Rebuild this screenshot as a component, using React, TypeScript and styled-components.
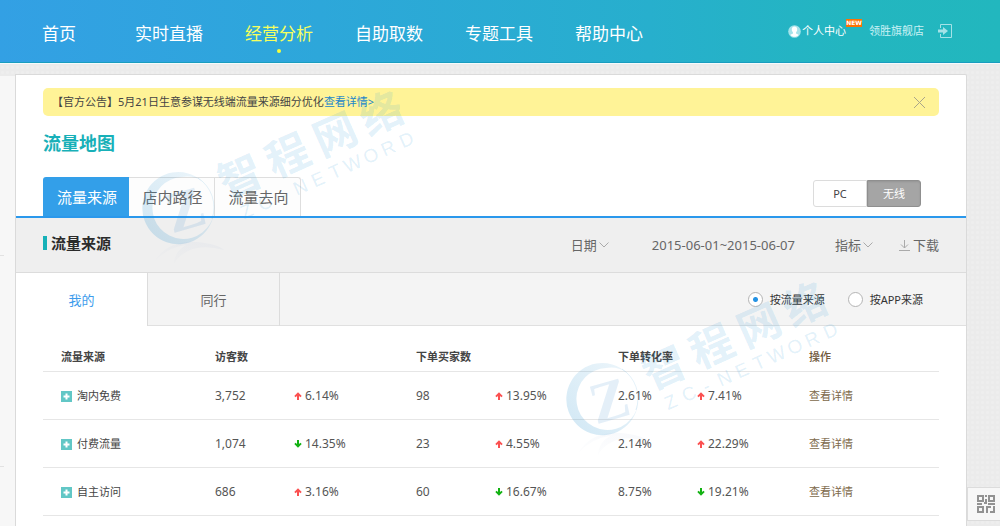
import React, { useState } from "react";
import styled, { createGlobalStyle } from "styled-components";

const GlobalStyle = createGlobalStyle`
  *, *::before, *::after { box-sizing: border-box; }
  body {
    margin: 0;
    background-color: #ebebeb;
    background-image: radial-gradient(#eeeeee 1px, transparent 2px);
    background-size: 5px 5px;
    color: #555;
    font-family: "Noto Sans", "Noto Sans CJK SC", sans-serif;
    font-size: 11px;
    line-height: 16px;
  }
  button, input { font: inherit; color: inherit; margin: 0; }
  button { border: 0; background: none; padding: 0; cursor: pointer; }
  a { text-decoration: none; color: inherit; }
`;

const Page = styled.div`
  position: relative;
  min-height: 100vh;
  display: flex;
  flex-direction: column;
  overflow: hidden;
`;

const Header = styled.header`
  height: 64px;
  display: flex;
  justify-content: space-between;
  padding: 0 47px 0 4px;
  background: linear-gradient(90deg, #33a0e4 0%, #2da7da 32%, #27afcd 65%, #23b6c0 85%, #22b7be 100%);
  border-bottom: 1px solid #f6fbfc;
  box-shadow: inset 0 -1px #1a9dbf;
`;

const Nav = styled.nav`
  display: flex;
`;

const NavLink = styled.a<{ $active?: boolean }>`
  width: 110px;
  padding-top: 22px;
  text-align: center;
  font-size: 17px;
  line-height: 24px;
  color: ${(p) => (p.$active ? "#f6ff5e" : "#fff")};

  &::after {
    content: "";
    display: ${(p) => (p.$active ? "block" : "none")};
    width: 4px;
    height: 4px;
    margin: 3px auto 0;
    border-radius: 50%;
    background: #f6ff3c;
  }
`;

const Account = styled.div`
  display: flex;
  align-items: center;
  height: 62px;
  color: #fff;
`;

const UserLink = styled.a`
  position: relative;
  display: flex;
  align-items: center;
  gap: 1px;
  margin-right: 23px;
`;

const NewBadge = styled.span`
  position: absolute;
  left: 100%;
  top: -4px;
  width: 16px;
  height: 8px;
  background: #ff7200;
  color: #fff;
  font-family: "DejaVu Sans", sans-serif;
  font-weight: 700;
  font-size: 6px;
  line-height: 8px;
  text-align: center;
`;

const ShopLink = styled.a`
  margin-right: 13px;
  color: #c9f1f4;
`;

const IconButton = styled.button`
  display: flex;
`;

const Body = styled.div`
  flex: 1;
  display: grid;
  grid-template-columns: 15px minmax(0, 1fr) 33px;
  padding-top: 10px;
`;

const Rail = styled.aside`
  margin-top: 2px;
  padding-top: 179px;
  background: #f7f7f7;
`;

const RailLine = styled.hr`
  width: 4px;
  margin: 0 0 210px;
  border: 0;
  border-top: 1px solid #e2e2e2;

  &:last-child { margin-bottom: 0; }
`;

const Panel = styled.main`
  background: #fff;
  border: 1px solid #dadada;
  border-bottom: 0;
  border-radius: 0 2px 0 0;
`;

const Notice = styled.section`
  display: flex;
  align-items: center;
  height: 28px;
  margin: 13px 27px 0;
  padding: 0 13px 0 9px;
  border-radius: 5px;
  background: #fff397;
  color: #444;
`;

const NoticeLink = styled.a`
  flex: 1;
  color: #1b86c9;
`;

const Title = styled.h1`
  margin: 14px 27px 0;
  font-size: 18px;
  line-height: 26px;
  font-weight: 700;
  color: #18b0b8;
`;

const TabBar = styled.div`
  display: flex;
  align-items: flex-end;
  justify-content: space-between;
  height: 62px;
  padding: 0 45px 0 27px;
  border-bottom: 2px solid #2a98ec;
`;

const Tabs = styled.div`
  display: flex;
`;

const Tab = styled.button<{ $active?: boolean }>`
  width: 86px;
  height: 39px;
  padding-left: 2px;
  border: solid ${(p) => (p.$active ? "#339fe9" : "#dedede")};
  border-width: ${(p) => (p.$active ? "0" : "1px 1px 0 0")};
  background: ${(p) => (p.$active ? "#339fe9" : "#fdfdfd")};
  color: ${(p) => (p.$active ? "#fff" : "#666")};
  font-size: 15px;
  line-height: 20px;

  &:first-child { border-top-left-radius: 3px; }
  &:last-child { border-top-right-radius: 3px; }
`;

const Segmented = styled.div`
  display: flex;
  width: 108px;
  height: 27px;
  margin-bottom: 9px;
`;

const Segment = styled.button<{ $active?: boolean }>`
  flex: 1;
  border: 1px solid ${(p) => (p.$active ? "#8f8f8f" : "#dcdcdc")};
  border-radius: ${(p) => (p.$active ? "0 3px 3px 0" : "3px 0 0 3px")};
  background: ${(p) => (p.$active ? "#a5a5a5" : "#fff")};
  box-shadow: ${(p) => (p.$active ? "inset 0 1px 2px #959595" : "none")};
  color: ${(p) => (p.$active ? "#fff" : "#444")};
`;

const Toolbar = styled.div`
  display: flex;
  align-items: center;
  height: 55px;
  padding: 0 27px;
  background: #efefef;
  border-bottom: 1px solid #dcdcdc;
  color: #666;
  font-size: 13px;
  line-height: 18px;
`;

const SectionTitle = styled.h2`
  display: flex;
  align-items: center;
  gap: 4px;
  flex: 1;
  margin: 0 0 4px;
  font-size: 15px;
  line-height: 20px;
  font-weight: 700;
  color: #2b2b2b;

  &::before {
    content: "";
    width: 4px;
    height: 14px;
    background: #16b1b8;
  }
`;

const ToolButton = styled.button`
  display: flex;
  align-items: center;
  gap: 2px;
`;

const DateRange = styled.span`
  margin: 0 40px 0 43px;
`;

const Download = styled(ToolButton)`
  margin-left: 26px;
  gap: 3px;
`;

const SubTabBar = styled.div`
  display: flex;
  height: 53px;
  background: #f4f4f4;
  box-shadow: inset 0 -1px #e0e0e0;
`;

const SubTab = styled.button<{ $active?: boolean }>`
  width: 132px;
  border-right: 1px solid #dcdcdc;
  background: ${(p) => (p.$active ? "#fff" : "transparent")};
  color: ${(p) => (p.$active ? "#3d9cec" : "#666")};
  font-size: 13px;
`;

const Filters = styled.div`
  display: flex;
  align-items: center;
  gap: 23px;
  margin-left: auto;
  padding-right: 43px;
  color: #333;
`;

const RadioLabel = styled.label`
  display: flex;
  align-items: center;
  gap: 7px;
`;

const Radio = styled.input`
  appearance: none;
  width: 15px;
  height: 15px;
  border: 1px solid #b4b4b4;
  border-radius: 50%;
  background: #fff;

  &:checked { background: radial-gradient(circle, #2492e4 2px, #fff 3px); }
`;

const Table = styled.table`
  width: calc(100% - 54px);
  margin: 0 27px;
  table-layout: fixed;
  border-collapse: collapse;
  font-size: 12px;
`;

const HeadCell = styled.th`
  height: 45px;
  padding: 18px 0 0 18px;
  border-bottom: 1px solid #e6e6e6;
  text-align: left;
  font-size: 11px;
  font-weight: 700;
  color: #444;
`;

const ActionHead = styled(HeadCell)`
  font-weight: 500;
  color: #70583a;
`;

const Cell = styled.td`
  height: 48px;
  padding: 2px 0 0 18px;
  border-bottom: 1px solid #e6e6e6;
`;

const SourceName = styled.div`
  display: flex;
  align-items: center;
  gap: 5px;
  font-size: 11px;
  color: #444;
`;

const Trend = styled.div`
  display: flex;
  align-items: center;
  gap: 3px;
`;

const DetailLink = styled.a`
  font-size: 11px;
  color: #7d694b;
`;

const QrButton = styled.button`
  position: absolute;
  right: 0;
  bottom: 5px;
  display: flex;
  align-items: center;
  justify-content: center;
  width: 33px;
  height: 34px;
  padding-left: 3px;
  border: 1px solid #dcdcdc;
  border-right: 0;
  background: #f7f7f7;
`;

const Watermark = styled.svg<{ $left: number; $top: number }>`
  position: absolute;
  left: ${(p) => p.$left}px;
  top: ${(p) => p.$top}px;
  pointer-events: none;
`;

const Chevron = () => (
  <svg width="10" height="6" viewBox="0 0 10 6" fill="none" stroke="#aaa" aria-hidden="true">
    <path d="M.5.5 5 5 9.500.5" />
  </svg>
);

const Arrow = ({ up }: { up: boolean }) => (
  <svg width="8" height="8" viewBox="0 0 8 8" fill="none" stroke={up ? "#fb5050" : "#12b212"} strokeWidth="2" aria-hidden="true">
    {up ? <path d="M4 8V1.500M1 4.600 4 1.600l3 3" /> : <path d="M4 0v6.500M1 3.400l3 3 3-3" />}
  </svg>
);

const Plus = () => (
  <svg width="11" height="11" viewBox="0 0 11 11" aria-hidden="true">
    <path fill="#62c7c6" d="M0 0h11v11H0z" />
    <path stroke="#fff" strokeWidth="2" d="M5.500 2.500v6M2.500 5.500h6" />
  </svg>
);

const Mark = ({ left, top, id }: { left: number; top: number; id: string }) => (
  <Watermark $left={left} $top={top} width="340" height="260" viewBox="0 -50 340 260" aria-hidden="true">
    <defs>
      <linearGradient id={id} x1="0" y1="1" x2="1" y2="0">
        <stop offset="0" stopColor="#2b93cf" stopOpacity=".22" />
        <stop offset="1" stopColor="#2b93cf" stopOpacity=".08" />
      </linearGradient>
      <linearGradient id={`${id}-fade`} x1="0" y1="1" x2="1" y2="0">
        <stop offset="0" stopColor="#7d94c4" stopOpacity=".01" />
        <stop offset="1" stopColor="#7d94c4" stopOpacity=".06" />
      </linearGradient>
    </defs>
    <path fill={`url(#${id})`} d="M72 101A36 36 0 1 0 84 133A31 31 0 1 1 52 97Q63 95 72 101Z" />
    <path fill="none" stroke={`url(#${id})`} strokeWidth="1" d="M68 98A35 35 0 0 1 82 139" />
    <text transform="translate(55 129) rotate(-16)" y="20" textAnchor="middle" fontFamily="Liberation Serif, serif" fontWeight="700" fontSize="58" fill="#3f8fd0" fillOpacity=".14">Z</text>
    <path fill={`url(#${id}-fade)`} d="M24 182Q38 160 66 162Q88 164 94 170Q72 164 58 171Q48 176 44 184Q44 172 56 165Q38 167 24 182Z" />
    <g transform="translate(108 97) rotate(-24)" fill="#2c9bd8" fillOpacity=".15" textAnchor="middle">
      <text x="2 54 106 157" y="16" fontFamily="Noto Sans CJK SC, sans-serif" fontWeight="700" fontSize="43">智程网络</text>
      <text x="-6 14 33 53 72 91 110 130 149 169" y="41" fontFamily="Liberation Sans, sans-serif" fontSize="19">ZC-NETWORD</text>
    </g>
  </Watermark>
);

const navItems = ["首页", "实时直播", "经营分析", "自助取数", "专题工具", "帮助中心"];
const tabs = ["流量来源", "店内路径", "流量去向"];
const columns = [154, 79, 122, 79, 123, 79, 112, 148];

type Metric = { value: string; change: string; up: boolean };
const rows: { name: string; metrics: Metric[] }[] = [
  {
    name: "淘内免费",
    metrics: [
      { value: "3,752", change: "6.14%", up: true },
      { value: "98", change: "13.95%", up: true },
      { value: "2.61%", change: "7.41%", up: true },
    ],
  },
  {
    name: "付费流量",
    metrics: [
      { value: "1,074", change: "14.35%", up: false },
      { value: "23", change: "4.55%", up: true },
      { value: "2.14%", change: "22.29%", up: true },
    ],
  },
  {
    name: "自主访问",
    metrics: [
      { value: "686", change: "3.16%", up: true },
      { value: "60", change: "16.67%", up: false },
      { value: "8.75%", change: "19.21%", up: false },
    ],
  },
];

export default function App() {
  const [source, setSource] = useState("flow");

  return (
    <Page>
      <GlobalStyle />
      <Header>
        <Nav>
          {navItems.map((item) => (
            <NavLink key={item} href="#" $active={item === "经营分析"}>{item}</NavLink>
          ))}
        </Nav>
        <Account>
          <UserLink href="#">
            <svg width="13" height="13" viewBox="0 0 13 13" aria-hidden="true">
              <circle cx="6.500" cy="6.500" r="6.300" fill="#a5e3ea" />
              <path fill="#fff" d="M6.500 1.600c2 0 2.900 1.400 2.700 3.200-.1 1.300-.7 2.100-1.200 2.600v1l2.600 1.400c-1.800 2.700-6.400 2.700-8.200 0L5 8.400v-1C4.500 6.900 3.900 6.100 3.800 4.800 3.600 3 4.500 1.600 6.500 1.600Z" />
            </svg>
            个人中心
            <NewBadge>NEW</NewBadge>
          </UserLink>
          <ShopLink href="#">领胜旗舰店</ShopLink>
          <IconButton aria-label="退出">
            <svg width="16" height="16" viewBox="0 0 16 16" fill="none" aria-hidden="true">
              <path stroke="#a4e2e7" d="M3.500 5V1.500h11v13h-11V11" />
              <path fill="#a4e2e7" d="M1 6.500h5V4l5 4-5 4V9.500H1z" />
            </svg>
          </IconButton>
        </Account>
      </Header>

      <Body>
        <Rail>
          <RailLine />
          <RailLine />
        </Rail>
        <Panel>
          <Notice>
            <span>【官方公告】5月21日生意参谋无线端流量来源细分优化</span>
            <NoticeLink href="#">查看详情&gt;</NoticeLink>
            <IconButton aria-label="关闭">
              <svg width="13" height="13" viewBox="0 0 13 13" stroke="#aaa58a" aria-hidden="true">
                <path d="M1 1l11 11M12 1 1 12" />
              </svg>
            </IconButton>
          </Notice>
          <Title>流量地图</Title>
          <TabBar>
            <Tabs>
              {tabs.map((tab, i) => (
                <Tab key={tab} $active={i === 0}>{tab}</Tab>
              ))}
            </Tabs>
            <Segmented>
              <Segment>PC</Segment>
              <Segment $active>无线</Segment>
            </Segmented>
          </TabBar>
          <Toolbar>
            <SectionTitle>流量来源</SectionTitle>
            <ToolButton>日期<Chevron /></ToolButton>
            <DateRange>2015-06-01~2015-06-07</DateRange>
            <ToolButton>指标<Chevron /></ToolButton>
            <Download>
              <svg width="11" height="11" viewBox="0 0 11 11" fill="none" stroke="#aaa" aria-hidden="true">
                <path d="M5.500 0v8M2 4.500 5.500 8 9 4.500M0 10.500h11" />
              </svg>
              下载
            </Download>
          </Toolbar>
          <SubTabBar>
            <SubTab $active>我的</SubTab>
            <SubTab>同行</SubTab>
            <Filters>
              <RadioLabel>
                <Radio type="radio" name="source" checked={source === "flow"} onChange={() => setSource("flow")} />
                按流量来源
              </RadioLabel>
              <RadioLabel>
                <Radio type="radio" name="source" checked={source === "app"} onChange={() => setSource("app")} />
                按APP来源
              </RadioLabel>
            </Filters>
          </SubTabBar>
          <Table>
            <colgroup>
              {columns.map((width, i) => (
                <col key={i} width={width} />
              ))}
            </colgroup>
            <thead>
              <tr>
                <HeadCell>流量来源</HeadCell>
                <HeadCell colSpan={2}>访客数</HeadCell>
                <HeadCell colSpan={2}>下单买家数</HeadCell>
                <HeadCell colSpan={2}>下单转化率</HeadCell>
                <ActionHead>操作</ActionHead>
              </tr>
            </thead>
            <tbody>
              {rows.map((row) => (
                <tr key={row.name}>
                  <Cell><SourceName><Plus />{row.name}</SourceName></Cell>
                  {row.metrics.map((m) => (
                    <React.Fragment key={m.value}>
                      <Cell>{m.value}</Cell>
                      <Cell><Trend><Arrow up={m.up} />{m.change}</Trend></Cell>
                    </React.Fragment>
                  ))}
                  <Cell><DetailLink href="#">查看详情</DetailLink></Cell>
                </tr>
              ))}
            </tbody>
          </Table>
        </Panel>
      </Body>

      <QrButton aria-label="二维码">
        <svg width="18" height="18" viewBox="0 0 18 18" fill="none" stroke="#929292" strokeWidth="2" aria-hidden="true">
          <path d="M1 1h5v5H1zM12 1h5v5h-5zM1 12h5v5H1z" />
          <path d="M9 0v2M9 4v4H7M0 9h5M11 9h7M10 18v-6h4M17 11v6h-4" />
        </svg>
      </QrButton>

      <Mark id="mark-top" left={130} top={30} />
      <Mark id="mark-bottom" left={554} top={221} />
    </Page>
  );
}
